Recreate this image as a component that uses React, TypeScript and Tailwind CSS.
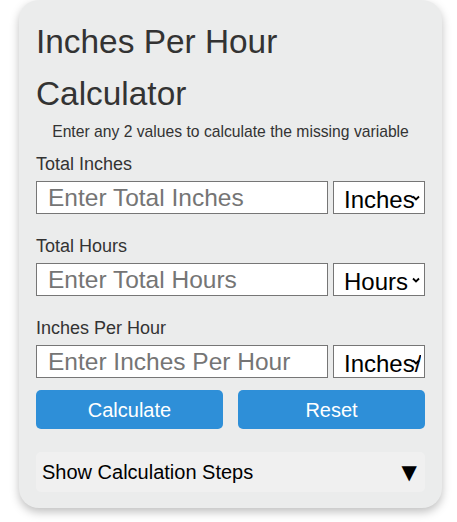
import React from "react";

function Chevron() {
  return (
    <svg
      className="pointer-events-none absolute right-[5px] top-1/2 -translate-y-1/2"
      width="8"
      height="6"
      viewBox="0 0 8 6"
    >
      <path d="M1 1.5 L4 4.5 L7 1.5" fill="none" stroke="#000" strokeWidth="1.8" />
    </svg>
  );
}

function Field({ label, placeholder, unit }: { label: string; placeholder: string; unit: string }) {
  return (
    <div className="flex flex-col">
      <label className="text-[18px] leading-[20px] text-[#333]">{label}</label>
      <div className="mt-[7px] flex gap-[5px]">
        <input
          placeholder={placeholder}
          className="h-[33px] w-[292px] border border-[#767676] bg-white px-[11px] pt-[1px] text-[24.5px] text-black placeholder:text-[#757575] outline-none"
        />
        <div className="relative h-[33px] w-[92px]">
          <select className="h-full w-full appearance-none overflow-hidden border border-[#767676] bg-white pb-[3px] pl-[10px] pr-[3px] text-[24px] text-black outline-none">
            <option>{unit}</option>
          </select>
          <Chevron />
        </div>
      </div>
    </div>
  );
}

export default function App() {
  return (
    <div className="min-h-[522px] bg-white font-['Liberation_Sans',Arial,sans-serif]">
      <div className="ml-[19px] w-[423px] rounded-[20px] bg-[#ebecec] px-[17px] pb-[16px] pt-[16px] shadow-[0_4px_10px_rgba(0,0,0,0.25)]">
        <h1 className="text-[33.4px] leading-[52px] text-[#333]">Inches Per Hour Calculator</h1>
        <p className="mt-[1px] text-center text-[15.7px] leading-[21px] text-[#333]">
          Enter any 2 values to calculate the missing variable
        </p>
        <div className="mt-[12px] flex flex-col gap-[22px]">
          <Field label="Total Inches" placeholder="Enter Total Inches" unit="Inches" />
          <Field label="Total Hours" placeholder="Enter Total Hours" unit="Hours" />
          <Field label="Inches Per Hour" placeholder="Enter Inches Per Hour" unit="Inches/Hour" />
        </div>
        <div className="mt-[12px] flex gap-[15px]">
          <button className="h-[39px] flex-1 rounded-[5px] bg-[#2e8fd8] text-[20px] text-white">Calculate</button>
          <button className="h-[39px] flex-1 rounded-[5px] bg-[#2e8fd8] text-[20px] text-white">Reset</button>
        </div>
        <div className="mt-[23px] flex h-[40px] items-center justify-between rounded-[5px] bg-[#f0f0f0] pl-[6px] pr-[8px] text-[20px] text-black">
          <span>Show Calculation Steps</span>
          <span className="font-['DejaVu_Sans',sans-serif] text-[20px] leading-none">▼</span>
        </div>
      </div>
    </div>
  );
}
